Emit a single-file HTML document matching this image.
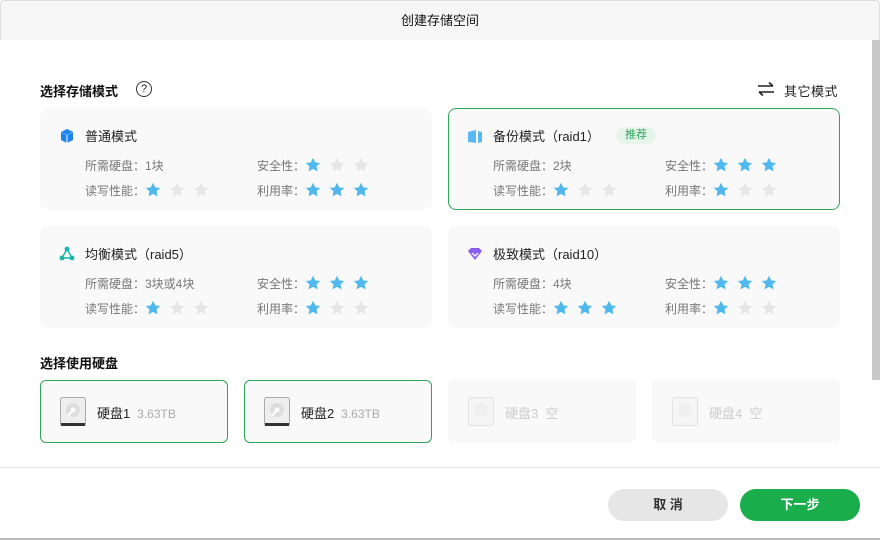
<!DOCTYPE html>
<html><head><meta charset="utf-8"><style>
*{margin:0;padding:0;box-sizing:border-box}
body{width:880px;height:540px;background:#fff;font-family:"Liberation Sans","Noto Sans CJK SC",sans-serif;position:relative;overflow:hidden;color:#222}
.a{position:absolute}
.hdr{left:0;top:0;width:880px;height:40px;background:#f6f6f6;border:1px solid #ddd;border-bottom:none;border-radius:4px 4px 0 0}
.title{top:10px;left:0;width:880px;text-align:center;font-size:13px;color:#111}
.sb{left:872px;top:40px;width:8px;height:340px;background:#c8c8c8}
.sec{font-size:13px;font-weight:bold;color:#111}
.card{background:#f9f9f9;border-radius:8px;border:1px solid #f9f9f9}
.disk{border-radius:6px;background:#f9f9f9;border:1px solid #f9f9f9}
.sel{border:1px solid #2fa55a}
.ct{font-size:13px;color:#222}
.inf{font-size:12px;color:#777}
.star{width:16px;height:16px;position:absolute}
.dn{font-size:13px;color:#222}
.ds{font-size:12px;color:#aaa}
.btn{height:32px;width:120px;border-radius:16px;text-align:center;line-height:32px;font-size:13px;font-weight:bold}
</style></head><body>
<div class="a hdr"></div>
<div class="a title">创建存储空间</div>
<div class="a sb"></div>
<div class="a sec" style="left:40px;top:81px">选择存储模式</div>
<div class="a" style="left:136px;top:81px;width:16px;height:16px;border:1.3px solid #333;border-radius:50%;font-size:11px;text-align:center;line-height:14px">?</div>
<svg class="a" style="left:757px;top:81px" width="18" height="16" viewBox="0 0 18 16"><path d="M1 5h15M12 1.5l4 3.5M17 11H2M6 14.5L2 11" stroke="#222" stroke-width="1.6" fill="none"/></svg>
<div class="a" style="left:784px;top:81px;font-size:13px;color:#222;letter-spacing:0.5px">其它模式</div>

<div class="a card" style="left:40px;top:108px;width:392px;height:102px"></div>
<div class="a card sel" style="left:448px;top:108px;width:392px;height:102px"></div>
<div class="a card" style="left:40px;top:226px;width:392px;height:102px"></div>
<div class="a card" style="left:448px;top:226px;width:392px;height:102px"></div>

<svg class="a" style="left:59px;top:128px" width="16" height="16" viewBox="0 0 16 16"><path d="M2 4l6-3 6 3v8l-6 3-6-3z" fill="#1e82f0"/><path d="M8 7v8" stroke="#fff" stroke-width="1"/><path d="M2 4l6 3 6-3" stroke="#5aaaf7" fill="none"/></svg>
<svg class="a" style="left:467px;top:128px" width="16" height="16" viewBox="0 0 16 16"><path d="M1 4l8-2v13l-8-1z" fill="#5bb7f0"/><path d="M11 3l4 1v10l-4 1z" fill="#5bb7f0"/></svg>
<svg class="a" style="left:59px;top:246px" width="16" height="16" viewBox="0 0 16 16"><path d="M8 3L3 12h10z" stroke="#18b4b0" stroke-width="1.4" fill="none"/><circle cx="8" cy="3" r="2.4" fill="#18b4b0"/><circle cx="3" cy="12" r="2.4" fill="#18b4b0"/><circle cx="13" cy="12" r="2.4" fill="#18b4b0"/></svg>
<svg class="a" style="left:467px;top:246px" width="16" height="16" viewBox="0 0 16 16"><path d="M1 5l3-3h8l3 3-7 9z" fill="#8b5cf0"/><path d="M5 7l3 3 3-3" stroke="#fff" stroke-width="1.3" fill="none"/></svg>

<div class="a ct" style="left:85px;top:126px">普通模式</div>
<div class="a ct" style="left:493px;top:126px">备份模式（raid1）</div>
<div class="a" style="left:616px;top:127px;width:40px;height:17px;background:#e5f5ea;color:#2fa55a;font-size:11px;text-align:center;line-height:17px;border-radius:9px">推荐</div>
<div class="a ct" style="left:85px;top:244px">均衡模式（raid5）</div>
<div class="a ct" style="left:493px;top:244px">极致模式（raid10）</div>

<div class="a inf" style="left:85px;top:157px">所需硬盘：1块</div>
<div class="a inf" style="left:85px;top:182px">读写性能：</div>
<div class="a inf" style="left:257px;top:157px">安全性：</div>
<div class="a inf" style="left:257px;top:182px">利用率：</div>
<div class="a inf" style="left:493px;top:157px">所需硬盘：2块</div>
<div class="a inf" style="left:493px;top:182px">读写性能：</div>
<div class="a inf" style="left:665px;top:157px">安全性：</div>
<div class="a inf" style="left:665px;top:182px">利用率：</div>
<div class="a inf" style="left:85px;top:275px">所需硬盘：3块或4块</div>
<div class="a inf" style="left:85px;top:300px">读写性能：</div>
<div class="a inf" style="left:257px;top:275px">安全性：</div>
<div class="a inf" style="left:257px;top:300px">利用率：</div>
<div class="a inf" style="left:493px;top:275px">所需硬盘：4块</div>
<div class="a inf" style="left:493px;top:300px">读写性能：</div>
<div class="a inf" style="left:665px;top:275px">安全性：</div>
<div class="a inf" style="left:665px;top:300px">利用率：</div>

<svg width="0" height="0" style="position:absolute"><defs><path id="st" d="M8 0.8l2.2 4.6 5 .6-3.7 3.4 1 5-4.5-2.5-4.5 2.5 1-5L0.8 6l5-.6z"/></defs></svg>
<div id="stars"></div>
<script>
var B="#4fb8ef",G="#e6e6e6";
var data=[[313,165,1],[153,190,1],[313,190,3],
[721,165,3],[561,190,1],[721,190,1],
[313,283,3],[153,308,1],[313,308,1],
[721,283,3],[561,308,3],[721,308,1]];
var h="";
data.forEach(function(r){for(var i=0;i<3;i++){h+='<svg class="star" style="left:'+(r[0]-8+i*24)+'px;top:'+(r[1]-8)+'px" viewBox="0 0 16 16"><use href="#st" fill="'+(i<r[2]?B:G)+'"/></svg>';}});
document.getElementById("stars").innerHTML=h;
</script>

<div class="a sec" style="left:40px;top:353px">选择使用硬盘</div>
<div class="a disk sel" style="left:40px;top:380px;width:188px;height:63px"></div>
<div class="a disk sel" style="left:244px;top:380px;width:188px;height:63px"></div>
<div class="a disk" style="left:448px;top:380px;width:188px;height:63px"></div>
<div class="a disk" style="left:652px;top:380px;width:188px;height:63px"></div>

<svg class="a" style="left:60px;top:397px" width="26" height="30" viewBox="0 0 26 30"><rect x="0.5" y="0.5" width="25" height="28" rx="2" fill="#eee" stroke="#aaa"/><rect x="1" y="26" width="24" height="3" fill="#333"/><circle cx="13" cy="13" r="7" fill="#ddd"/><circle cx="13" cy="13" r="2.5" fill="#fff"/><path d="M13 13l-5 6" stroke="#fff" stroke-width="2"/></svg>
<svg class="a" style="left:264px;top:397px" width="26" height="30" viewBox="0 0 26 30"><rect x="0.5" y="0.5" width="25" height="28" rx="2" fill="#eee" stroke="#aaa"/><rect x="1" y="26" width="24" height="3" fill="#333"/><circle cx="13" cy="13" r="7" fill="#ddd"/><circle cx="13" cy="13" r="2.5" fill="#fff"/><path d="M13 13l-5 6" stroke="#fff" stroke-width="2"/></svg>
<svg class="a" style="left:468px;top:397px;opacity:.35" width="26" height="30" viewBox="0 0 26 30"><rect x="0.5" y="0.5" width="25" height="28" rx="2" fill="#eee" stroke="#bbb"/><circle cx="13" cy="13" r="7" fill="#ddd"/></svg>
<svg class="a" style="left:672px;top:397px;opacity:.35" width="26" height="30" viewBox="0 0 26 30"><rect x="0.5" y="0.5" width="25" height="28" rx="2" fill="#eee" stroke="#bbb"/><circle cx="13" cy="13" r="7" fill="#ddd"/></svg>

<div class="a dn" style="left:97px;top:403px">硬盘1 <span class="ds">&nbsp;3.63TB</span></div>
<div class="a dn" style="left:301px;top:403px">硬盘2 <span class="ds">&nbsp;3.63TB</span></div>
<div class="a dn" style="left:505px;top:403px;color:#ccc">硬盘3 &nbsp;空</div>
<div class="a dn" style="left:709px;top:403px;color:#ccc">硬盘4 &nbsp;空</div>

<div class="a" style="left:0;top:467px;width:880px;height:1px;background:#e4e4e4"></div>
<div class="a" style="left:0;top:538px;width:880px;height:2px;background:#bbb"></div>
<div class="a btn" style="left:608px;top:489px;background:#e6e6e6;color:#333">取 消</div>
<div class="a btn" style="left:740px;top:489px;background:#1aad4b;color:#fff">下一步</div>
</body></html>
